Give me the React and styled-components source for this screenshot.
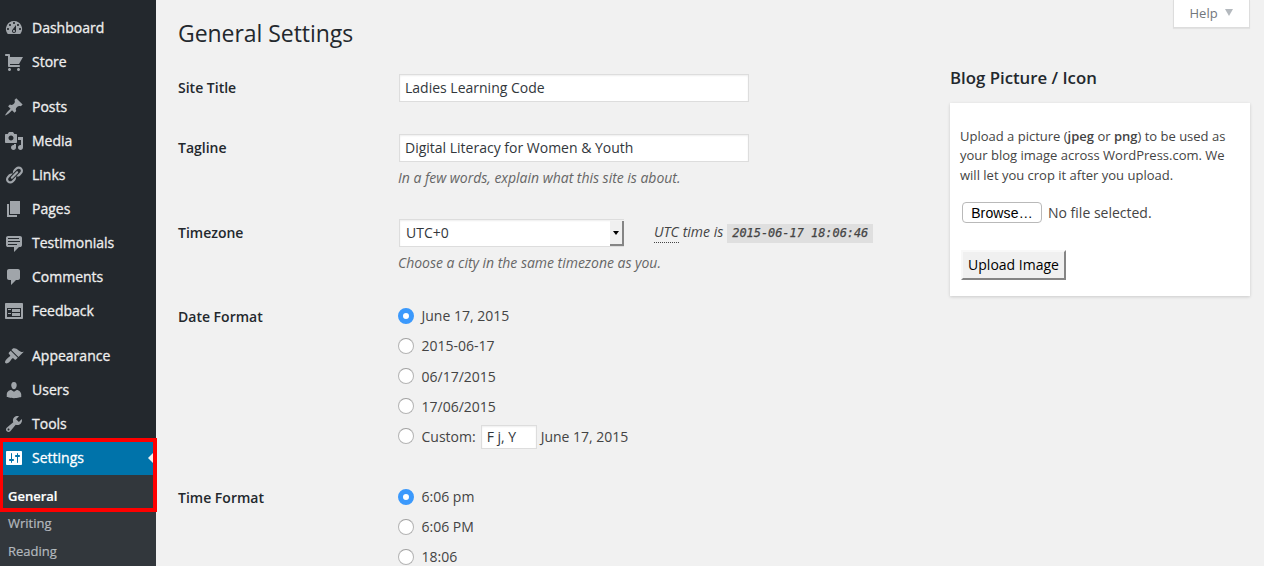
import React from "react";
import styled, { createGlobalStyle, css } from "styled-components";

const GlobalStyle = createGlobalStyle`
  *, *::before, *::after { box-sizing: border-box; }
  html, body { height: 100%; }
  body {
    margin: 0;
    overflow: hidden;
    background: #f1f1f1;
    color: #444;
    font-family: "Open Sans", sans-serif;
    font-size: 14px;
    line-height: 20px;
  }
  input, select, button { font: inherit; margin: 0; }
`;

const Page = styled.div`
  display: flex;
  height: 566px;
  overflow: hidden;
`;

/* ---------- admin menu ---------- */

const Sidebar = styled.nav`
  flex: 0 0 156px;
  position: relative;
  display: flex;
  flex-direction: column;
  gap: 11px;
  padding-top: 11px;
  background: #23282d;
`;

const MenuGroup = styled.div`
  display: flex;
  flex-direction: column;
`;

const MenuItem = styled.a`
  position: relative;
  display: flex;
  align-items: center;
  gap: 8px;
  height: 34px;
  padding-left: 4px;
  color: ${(p) => (p.$current ? "#fff" : "#eee")};
  background: ${(p) => (p.$current ? "#0073aa" : "transparent")};
  -webkit-text-stroke: 0.3px currentColor;
  white-space: nowrap;
  ${(p) =>
    p.$current &&
    css`
      &::after {
        content: "";
        position: absolute;
        right: 0;
        top: 9px;
        border: 8px solid transparent;
        border-right-color: #f1f1f1;
        border-left-width: 0;
      }
    `}
`;

const MenuIcon = styled.svg`
  flex: none;
  width: 20px;
  height: 20px;
  fill: ${(p) => (p.$current ? "#fff" : "#a0a5aa")};
`;

const SubMenu = styled.div`
  flex: 1;
  display: flex;
  flex-direction: column;
  padding: 7px 0 0 8px;
  margin-top: -11px;
  background: #32373c;
`;

const SubItem = styled.a`
  height: ${(p) => (p.$current ? 27 : 28)}px;
  line-height: 28px;
  font-size: 13px;
  font-weight: ${(p) => (p.$current ? 600 : 400)};
  -webkit-text-stroke: 0.2px currentColor;
  color: ${(p) => (p.$current ? "#fff" : "#b4b9be")};
`;

const Highlight = styled.div`
  position: absolute;
  z-index: 2;
  left: 0;
  top: 438px;
  width: 157px;
  height: 74px;
  border: 4px solid #f00;
  border-left-width: 3px;
`;

/* ---------- content ---------- */

const Content = styled.main`
  flex: 1;
  display: flex;
  padding: 0 14px 0 22px;
`;

const FormColumn = styled.section`
  width: 772px;
  flex: none;
`;

const Title = styled.h1`
  margin: 0;
  padding-top: 19px;
  height: 58px;
  font-size: 23px;
  line-height: 29px;
  font-weight: 400;
  letter-spacing: -0.05px;
  color: #23282d;
`;

const Row = styled.div`
  display: flex;
  height: ${(p) => p.$height}px;
  padding-top: 16px;
`;

const RowLabel = styled.div`
  width: 220px;
  flex: none;
  padding-top: 4px;
  font-weight: 600;
  color: #23282d;
`;

const Field = styled.div`
  flex: 1;
  white-space: nowrap;
`;

const TextInput = styled.input`
  display: block;
  width: ${(p) => p.$width || 350}px;
  height: ${(p) => p.$height || 28}px;
  margin-left: 1px;
  padding: 0 5px 1px;
  border: 1px solid #ddd;
  border-radius: 0;
  outline: none;
  background: #fff;
  color: #32373c;
  box-shadow: inset 0 1px 2px rgba(0, 0, 0, 0.07);
`;

const Description = styled.p`
  margin: 6px 0 0;
  font-style: italic;
  letter-spacing: -0.02px;
  color: #666;
`;

const Inline = styled.div`
  display: flex;
  align-items: center;
`;

const SelectBox = styled.div`
  display: flex;
  justify-content: space-between;
  width: 225px;
  height: 28px;
  margin-left: 1px;
  padding-left: 6px;
  line-height: 26px;
  border: 1px solid #ddd;
  border-right: 0;
  background: #fff;
  color: #32373c;
  box-shadow: inset 0 1px 2px rgba(0, 0, 0, 0.07);
`;

const SelectArrow = styled.span`
  display: flex;
  align-items: center;
  justify-content: center;
  width: 14px;
  margin-top: 1px;
  background: #f0f0f0;
  border-right: 2px solid #858585;
  border-bottom: 2px solid #858585;
  &::before {
    content: "";
    border: 3px solid transparent;
    border-top: 4px solid #000;
    border-bottom-width: 0;
  }
`;

const UtcTime = styled.span`
  display: flex;
  align-items: center;
  margin-left: 30px;
  margin-bottom: 3px;
  font-style: italic;
`;

const Abbr = styled.abbr`
  line-height: 20px;
  margin-top: 1px;
  text-decoration: none;
  border-bottom: 1px dotted #444;
  margin-right: 4px;
`;

const Code = styled.code`
  margin: 3px 0 0 4px;
  height: 19px;
  padding: 0 5px;
  line-height: 19px;
  font-family: "DejaVu Sans Mono", monospace;
  font-size: 11.9px;
  -webkit-text-stroke: 0.25px currentColor;
  background: #dfdfdf;
`;

const Options = styled.div`
  display: flex;
  flex-direction: column;
  padding-top: 3px;
`;

const Option = styled.label`
  display: flex;
  align-items: center;
  height: 30px;
  padding-bottom: 10px;
`;

const OptionText = styled.span`
  display: flex;
  align-items: center;
  gap: 4px;
  margin-top: ${(p) => (p.$lowered ? 2 : 0)}px;
`;

const Radio = styled.span`
  flex: none;
  width: 16px;
  height: 16px;
  margin-right: 7.5px;
  border-radius: 50%;
  border: 1px solid #b4b4b4;
  border-top-color: #a0a0a0;
  background: #fff;
  ${(p) =>
    p.$checked &&
    css`
      border: 5px solid #3b99fc;
    `}
`;

/* ---------- right column ---------- */

const SideColumn = styled.aside`
  flex: 1;
  display: flex;
  flex-direction: column;
`;

const HelpTab = styled.div`
  align-self: flex-end;
  display: flex;
  align-items: center;
  gap: 7px;
  width: 77px;
  height: 28px;
  padding: 0 0 2px 15.5px;
  font-size: 13px;
  color: #72777c;
  background: #fff;
  border: 1px solid #ddd;
  border-top: 0;
  box-shadow: 0 1px 1px rgba(0, 0, 0, 0.06);
  &::after {
    content: "";
    border: 4.5px solid transparent;
    border-top: 7px solid #b4b9be;
    border-bottom-width: 0;
  }
`;

const SideTitle = styled.h2`
  margin: 39px 0 14px;
  font-size: 16.8px;
  line-height: 22px;
  font-weight: 600;
  color: #23282d;
`;

const Card = styled.div`
  width: 300px;
  height: 193px;
  padding: 24px 10px 0;
  background: #fff;
  box-shadow: 0 1px 3px rgba(0, 0, 0, 0.16);
`;

const CardText = styled.p`
  margin: 0;
  font-size: 13px;
  line-height: 19.4px;
  white-space: nowrap;
  b { font-weight: 600; }
`;

const FilePicker = styled.div`
  display: flex;
  align-items: center;
  gap: 6px;
  height: 20px;
  margin: 17.8px 0 0 2px;
`;

const BrowseButton = styled.button`
  width: 80px;
  height: 21px;
  margin-top: -1px;
  padding: 0;
  border: 1px solid #b9b9b9;
  border-radius: 4px;
  background: #fff;
  color: #000;
  font-family: "Liberation Sans", sans-serif;
  font-size: 14px;
  line-height: 18px;
  letter-spacing: 0.15px;
`;

const UploadButton = styled.button`
  display: block;
  width: 105px;
  height: 30px;
  margin: 27px 0 0 1px;
  padding: 0;
  border: 2px solid #858585;
  border-top-color: #f8f8f8;
  border-left-color: #f8f8f8;
  background: #f0f0f0;
  color: #000;
`;

const ICONS = {
  dashboard:
    "M3.76 16h12.48A7.998 7.998 0 0 0 10 3a7.998 7.998 0 0 0-6.24 13zM10 4c.55 0 1 .45 1 1s-.45 1-1 1-1-.45-1-1 .45-1 1-1zM6 6c.55 0 1 .45 1 1s-.45 1-1 1-1-.45-1-1 .45-1 1-1zm8 0c.55 0 1 .45 1 1s-.45 1-1 1-1-.45-1-1 .45-1 1-1zm-5.37 5.55L12 7v6c0 1.1-.9 2-2 2s-2-.9-2-2c0-.57.24-1.08.63-1.45zM4 10c.55 0 1 .45 1 1s-.45 1-1 1-1-.45-1-1 .45-1 1-1zm12 0c.55 0 1 .45 1 1s-.45 1-1 1-1-.45-1-1 .45-1 1-1zm-5 3c0-.55-.45-1-1-1s-1 .45-1 1 .45 1 1 1 1-.45 1-1z",
  store:
    "M6 13h9c.55 0 1 .45 1 1s-.45 1-1 1H5c-.55 0-1-.45-1-1V4H2c-.55 0-1-.45-1-1s.45-1 1-1h3c.55 0 1 .45 1 1v2h13l-4 7H6v1zm-.5 3c.83 0 1.5.67 1.5 1.5S6.33 19 5.5 19 4 18.33 4 17.5 4.67 16 5.5 16zm9 0c.83 0 1.5.67 1.5 1.5s-.67 1.5-1.5 1.5-1.5-.67-1.5-1.5.67-1.5 1.5-1.5z",
  posts:
    "M10.44 3.02l1.82-1.82 6.36 6.35-1.83 1.82c-1.05-.68-2.48-.57-3.41.36l-.75.75c-.92.93-1.04 2.35-.35 3.41l-1.83 1.82-2.41-2.41-2.8 2.79c-.42.42-3.38 2.71-3.8 2.29s1.86-3.39 2.28-3.81l2.79-2.79L4.1 9.36l1.83-1.82c1.05.69 2.48.57 3.4-.36l.75-.75c.93-.92 1.05-2.35.36-3.41z",
  media:
    "M13 11V4c0-.55-.45-1-1-1h-1.67L9 1H5L3.67 3H2c-.55 0-1 .45-1 1v7c0 .55.45 1 1 1h10c.55 0 1-.45 1-1zM7 4.5c1.38 0 2.5 1.12 2.5 2.5S8.38 9.5 7 9.5 4.5 8.38 4.5 7 5.62 4.5 7 4.5zM14 6h5v10.5c0 1.38-1.12 2.5-2.5 2.5S14 17.88 14 16.5s1.12-2.5 2.5-2.5c.17 0 .34.02.5.05V9h-3V6zm-4 8.05V13h2v3.5c0 1.38-1.12 2.5-2.5 2.5S7 17.88 7 16.5 8.12 14 9.5 14c.17 0 .34.02.5.05z",
  links:
    "M17.74 2.76c1.68 1.69 1.68 4.41 0 6.1l-1.53 1.52c-1.12 1.12-2.7 1.47-4.14 1.09l2.62-2.61.76-.77.76-.76c.84-.84.84-2.2 0-3.04-.84-.85-2.2-.85-3.04 0l-.77.76-3.38 3.38c-.37-1.44-.02-3.02 1.1-4.14l1.52-1.53c1.69-1.68 4.42-1.68 6.1 0zM8.59 13.43l5.34-5.34c.42-.42.42-1.1 0-1.52-.44-.43-1.13-.39-1.53 0l-5.33 5.34c-.42.42-.42 1.1 0 1.52.44.43 1.13.39 1.52 0zm-.76 2.29l4.14-4.15c.38 1.44.03 3.02-1.09 4.14l-1.52 1.53c-1.69 1.68-4.41 1.68-6.1 0-1.68-1.68-1.68-4.42 0-6.1l1.53-1.52c1.12-1.12 2.7-1.47 4.14-1.1l-4.14 4.15c-.85.84-.85 2.2 0 3.05.84.84 2.2.84 3.04 0z",
  pages: "M6 15V2h10v13H6zm-1 1h8v2H3V5h2v11z",
  testimonials:
    "M4 3h12c.55 0 1.02.2 1.41.59S18 4.45 18 5v7c0 .55-.2 1.02-.59 1.41S16.55 14 16 14h-1l-5 5v-5H4c-.55 0-1.02-.2-1.41-.59S2 12.55 2 12V5c0-.55.2-1.02.59-1.41S3.45 3 4 3zm11 2H4v1h11V5zm1 3H4v1h12V8zm-3 3H4v1h9v-1z",
  comments:
    "M5 2h9c1.1 0 2 .9 2 2v7c0 1.1-.9 2-2 2h-2l-5 5v-5H5c-1.1 0-2-.9-2-2V4c0-1.1.9-2 2-2z",
  feedback:
    "M2 2h16c.55 0 1 .45 1 1v14c0 .55-.45 1-1 1H2c-.55 0-1-.45-1-1V3c0-.55.45-1 1-1zm15 14V7H3v9h14zM4 8v1h3V8H4zm4 0v3h8V8H8zm-4 4v1h3v-1H4zm4 0v3h8v-3H8z",
  appearance:
    "M14.48 11.06L7.41 3.99l1.5-1.5c.5-.56 2.3-.47 3.51.32 1.21.8 1.43 1.28 2.91 2.1 1.18.64 2.45 1.26 4.45.85zm-.71.71L6.7 4.7 4.93 6.47c-.39.39-.39 1.02 0 1.41l1.06 1.06c.39.39.39 1.03 0 1.42-.6.6-1.43 1.11-2.21 1.69-.35.26-.7.53-1.01.84C1.43 14.23.4 16.08 1.4 17.07c.99 1 2.84-.03 4.18-1.36.31-.31.58-.66.85-1.02.57-.78 1.08-1.61 1.69-2.21.39-.39 1.02-.39 1.41 0l1.06 1.06c.39.39 1.02.39 1.41 0z",
  users:
    "M10 9.25c-2.27 0-2.73-3.44-2.73-3.44C7 4.02 7.82 2 9.97 2c2.16 0 2.98 2.02 2.71 3.81 0 0-.41 3.44-2.68 3.44zm0 2.57L12.72 10c2.39 0 4.52 2.33 4.52 4.53v2.49s-3.65 1.13-7.24 1.13c-3.65 0-7.24-1.13-7.24-1.13v-2.49c0-2.25 1.94-4.48 4.47-4.48z",
  tools:
    "M16.68 9.77c-1.34 1.34-3.3 1.67-4.95.99l-5.41 6.52c-.99.99-2.59.99-3.58 0s-.99-2.59 0-3.57l6.52-5.42c-.68-1.65-.35-3.61.99-4.95 1.28-1.28 3.12-1.62 4.72-1.06l-2.89 2.89 2.82 2.82 2.86-2.87c.53 1.58.18 3.39-1.08 4.65zM3.81 16.21c.4.39 1.04.39 1.43 0 .4-.4.4-1.04 0-1.43-.39-.4-1.03-.4-1.43 0-.39.39-.39 1.03 0 1.43z",
  settings:
    "M18 16V4c0-.55-.45-1-1-1H3c-.55 0-1 .45-1 1v12c0 .55.45 1 1 1h14c.55 0 1-.45 1-1zM8 11h1c.55 0 1 .45 1 1s-.45 1-1 1H8v1.5c0 .28-.22.5-.5.5s-.5-.22-.5-.5V13H6c-.55 0-1-.45-1-1s.45-1 1-1h1V5.5c0-.28.22-.5.5-.5s.5.22.5.5V11zm5-2h-1c-.55 0-1-.45-1-1s.45-1 1-1h1V5.5c0-.28.22-.5.5-.5s.5.22.5.5V7h1c.55 0 1 .45 1 1s-.45 1-1 1h-1v5.5c0 .28-.22.5-.5.5s-.5-.22-.5-.5V9z",
};

const MENU = [
  [["dashboard", "Dashboard"], ["store", "Store"]],
  [
    ["posts", "Posts"],
    ["media", "Media"],
    ["links", "Links"],
    ["pages", "Pages"],
    ["testimonials", "Testimonials"],
    ["comments", "Comments"],
    ["feedback", "Feedback"],
  ],
  [
    ["appearance", "Appearance"],
    ["users", "Users"],
    ["tools", "Tools"],
    ["settings", "Settings"],
  ],
];

function AdminMenu() {
  return (
    <Sidebar>
      {MENU.map((group, i) => (
        <MenuGroup key={i}>
          {group.map(([icon, label]) => {
            const current = icon === "settings";
            return (
              <MenuItem key={icon} $current={current}>
                <MenuIcon viewBox="0 0 20 20" $current={current}>
                  <path d={ICONS[icon]} />
                </MenuIcon>
                {label}
              </MenuItem>
            );
          })}
        </MenuGroup>
      ))}
      <SubMenu>
        <SubItem $current>General</SubItem>
        <SubItem>Writing</SubItem>
        <SubItem>Reading</SubItem>
      </SubMenu>
      <Highlight />
    </Sidebar>
  );
}

function RadioOption({ checked, lowered, children }) {
  return (
    <Option>
      <Radio $checked={checked} />
      <OptionText $lowered={lowered}>{children}</OptionText>
    </Option>
  );
}

export default function App() {
  return (
    <>
      <GlobalStyle />
      <Page>
        <AdminMenu />
        <Content>
          <FormColumn>
            <Title>General Settings</Title>
            <Row $height={60}>
              <RowLabel>Site Title</RowLabel>
              <Field>
                <TextInput defaultValue="Ladies Learning Code" />
              </Field>
            </Row>
            <Row $height={85}>
              <RowLabel>Tagline</RowLabel>
              <Field>
                <TextInput defaultValue="Digital Literacy for Women &amp; Youth" />
                <Description>In a few words, explain what this site is about.</Description>
              </Field>
            </Row>
            <Row $height={84}>
              <RowLabel>Timezone</RowLabel>
              <Field>
                <Inline>
                  <SelectBox>
                    UTC+0
                    <SelectArrow />
                  </SelectBox>
                  <UtcTime>
                    <Abbr>UTC</Abbr>time is
                    <Code>2015-06-17 18:06:46</Code>
                  </UtcTime>
                </Inline>
                <Description>Choose a city in the same timezone as you.</Description>
              </Field>
            </Row>
            <Row $height={181}>
              <RowLabel>Date Format</RowLabel>
              <Options>
                <RadioOption checked>June 17, 2015</RadioOption>
                <RadioOption>2015-06-17</RadioOption>
                <RadioOption lowered>06/17/2015</RadioOption>
                <RadioOption lowered>17/06/2015</RadioOption>
                <RadioOption lowered>
                  Custom:
                  <TextInput $width={56} $height={24} defaultValue="F j, Y" />
                  June 17, 2015
                </RadioOption>
              </Options>
            </Row>
            <Row $height={120}>
              <RowLabel>Time Format</RowLabel>
              <Options>
                <RadioOption checked>6:06 pm</RadioOption>
                <RadioOption>6:06 PM</RadioOption>
                <RadioOption>18:06</RadioOption>
              </Options>
            </Row>
          </FormColumn>
          <SideColumn>
            <HelpTab>Help</HelpTab>
            <SideTitle>Blog Picture / Icon</SideTitle>
            <Card>
              <CardText>
                Upload a picture (<b>jpeg</b> or <b>png</b>) to be used as
                <br />
                your blog image across WordPress.com. We
                <br />
                will let you crop it after you upload.
              </CardText>
              <FilePicker>
                <BrowseButton>Browse…</BrowseButton>
                No file selected.
              </FilePicker>
              <UploadButton>Upload Image</UploadButton>
            </Card>
          </SideColumn>
        </Content>
      </Page>
    </>
  );
}
